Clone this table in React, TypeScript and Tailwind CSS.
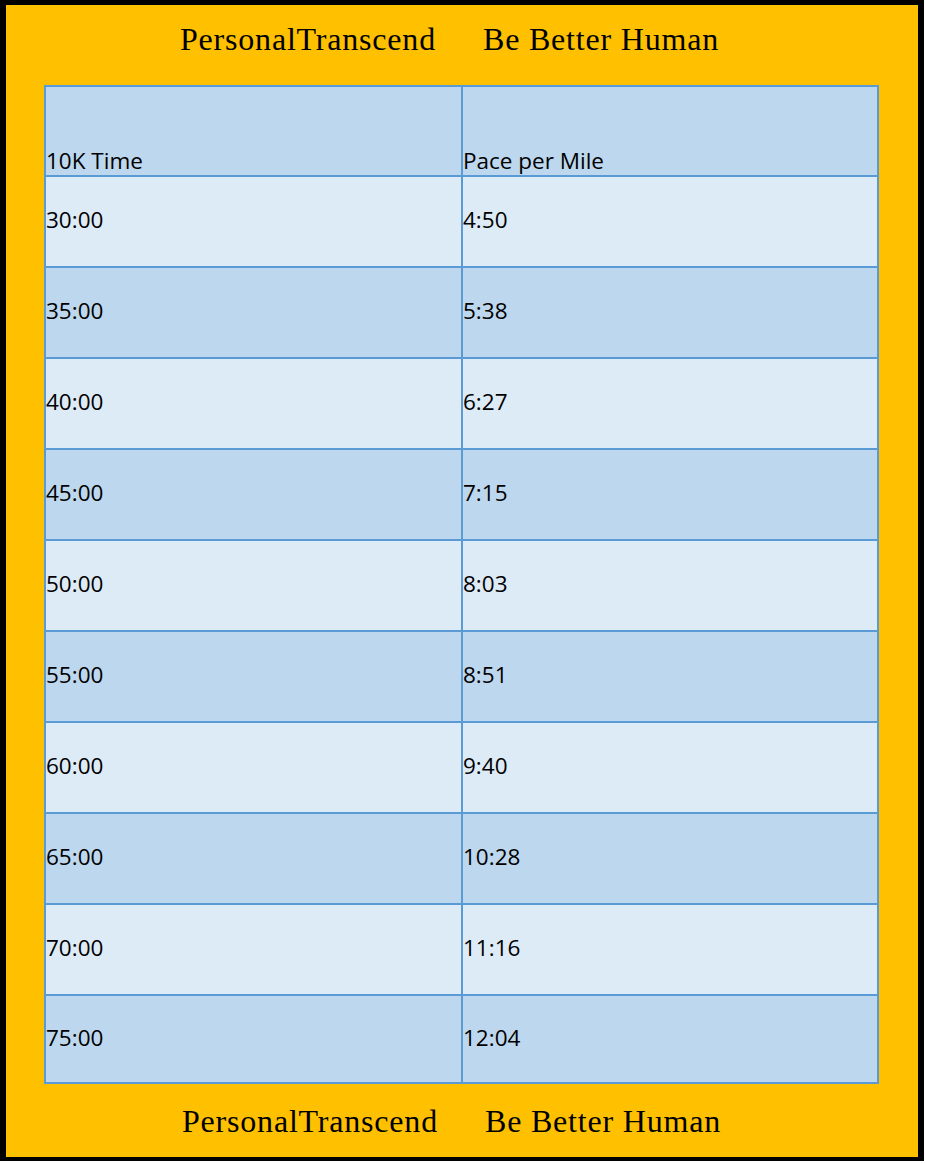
import React from "react";

const rows: [string, string][] = [
  ["30:00", "4:50"],
  ["35:00", "5:38"],
  ["40:00", "6:27"],
  ["45:00", "7:15"],
  ["50:00", "8:03"],
  ["55:00", "8:51"],
  ["60:00", "9:40"],
  ["65:00", "10:28"],
  ["70:00", "11:16"],
  ["75:00", "12:04"],
];

function Banner({ className }: { className: string }) {
  return (
    <div
      className={`flex text-[32px] leading-[32px] tracking-[0.8px] text-black ${className}`}
      style={{ fontFamily: '"Liberation Serif", "Times New Roman", serif' }}
    >
      <span className="w-[303px] shrink-0 whitespace-nowrap">PersonalTranscend</span>
      <span className="whitespace-nowrap">Be Better Human</span>
    </div>
  );
}

export default function App() {
  return (
    <div className="bg-white min-h-[1163px]">
      <div className="w-[924px] h-[1161px] border-black border-x-[6px] border-t-[5px] border-b-[4px] bg-[#FFC000] flex flex-col">
        <Banner className="h-[80px] pt-[18px] pl-[174px]" />
        <div
          className="ml-[38px] w-[835px] grid grid-cols-[415px_414px] gap-[2px] p-[2px] bg-[#5B9BD5] text-[22.5px] text-black"
          style={{ fontFamily: '"Open Sans", "Noto Sans", sans-serif' }}
        >
          <div className="h-[88px] bg-[#BDD7EE] flex items-end leading-[28px]">10K Time</div>
          <div className="h-[88px] bg-[#BDD7EE] flex items-end leading-[28px]">Pace per Mile</div>
          {rows.map(([a, b], i) => {
            const bg = i % 2 === 0 ? "bg-[#DDEBF7]" : "bg-[#BDD7EE]";
            const h = i === rows.length - 1 ? "h-[86px]" : "h-[89px]";
            return (
              <React.Fragment key={a}>
                <div className={`${h} ${bg} flex items-center pb-[3px] leading-[30px]`}>{a}</div>
                <div className={`${h} ${bg} flex items-center pb-[3px] leading-[30px]`}>{b}</div>
              </React.Fragment>
            );
          })}
        </div>
        <Banner className="h-[73px] pt-[21px] pl-[176px]" />
      </div>
    </div>
  );
}
